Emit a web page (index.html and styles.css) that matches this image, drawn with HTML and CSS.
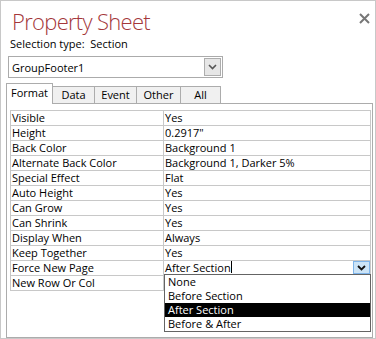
FILE: index.html
```html
<!DOCTYPE html>
<html lang="en">
<head>
    <meta charset="UTF-8">
    <title>Property Sheet</title>
    <link rel="stylesheet" href="styles.css">
</head>
<body>
    <div class="window">
        <div class="header">
            <h1 class="title">Property Sheet</h1>
            <button class="close" title="Close">
                <svg width="11" height="11" viewBox="0 0 11 11">
                    <path d="M1 1 L10 10 M10 1 L1 10" stroke="#777" stroke-width="2"/>
                </svg>
            </button>
        </div>
        <div class="selection">Selection type:&nbsp; Section</div>

        <!-- Object picker -->
        <div class="combo">
            <span class="combo-text">GroupFooter1</span>
            <span class="combo-btn">
                <svg width="9" height="6" viewBox="0 0 9 6"><path d="M1 1 L4.5 4.5 L8 1" stroke="#555" stroke-width="1.6" fill="none"/></svg>
            </span>
        </div>

        <!-- Tabs -->
        <div class="tabs">
            <div class="tab active tab-format">Format</div>
            <div class="tab tab-data">Data</div>
            <div class="tab tab-event">Event</div>
            <div class="tab tab-other">Other</div>
            <div class="tab tab-all">All</div>
        </div>

        <div class="panel">
            <div class="props">
                <div class="row"><div class="name">Visible</div><div class="value">Yes</div></div>
                <div class="row"><div class="name">Height</div><div class="value">0.2917"</div></div>
                <div class="row"><div class="name">Back Color</div><div class="value">Background 1</div></div>
                <div class="row"><div class="name">Alternate Back Color</div><div class="value">Background 1, Darker 5%</div></div>
                <div class="row"><div class="name">Special Effect</div><div class="value">Flat</div></div>
                <div class="row"><div class="name">Auto Height</div><div class="value">Yes</div></div>
                <div class="row"><div class="name">Can Grow</div><div class="value">Yes</div></div>
                <div class="row"><div class="name">Can Shrink</div><div class="value">Yes</div></div>
                <div class="row"><div class="name">Display When</div><div class="value">Always</div></div>
                <div class="row"><div class="name">Keep Together</div><div class="value">Yes</div></div>
                <div class="row"><div class="name">Force New Page</div>
                    <div class="value editing">
                        <span class="edit-text">After Section</span><span class="caret"></span>
                        <span class="drop-btn">
                            <svg width="9" height="6" viewBox="0 0 9 6"><path d="M1 1 L4.5 4.5 L8 1" stroke="#111" stroke-width="1.8" fill="none"/></svg>
                        </span>
                        <!-- open list -->
                        <ul class="droplist">
                            <li>None</li>
                            <li>Before Section</li>
                            <li class="selected">After Section</li>
                            <li>Before &amp; After</li>
                        </ul>
                    </div>
                </div>
                <div class="row"><div class="name">New Row Or Col</div><div class="value"></div></div>
            </div>
        </div>
    </div>
</body>
</html>
```

FILE: styles.css
```css
* {
    box-sizing: border-box;
    margin: 0;
    padding: 0;
}

body {
    font-family: 'Open Sans', sans-serif;
    font-size: 11px;
    color: #000;
    background-color: #fff;
}

.window {
    width: 376px;
    height: 339px;
    border: 1px solid #c8c8c8;
    background-color: #fff;
}

.header {
    display: flex;
    justify-content: space-between;
    align-items: flex-start;
    padding: 6px 5px 0 11px;
}

.title {
    font-family: 'Open Sans', sans-serif;
    font-weight: 300;
    font-size: 22px;
    letter-spacing: -0.7px;
    line-height: 28px;
    color: #a4373a;
}

.close {
    border: none;
    background: none;
    margin-top: 6px;
    width: 11px;
    height: 11px;
    display: flex;
}

.selection {
    padding-left: 9px;
    line-height: 16px;
    margin-top: 1px;
}

.combo {
    display: flex;
    align-items: center;
    justify-content: space-between;
    margin: 4px 0 0 7px;
    width: 215px;
    height: 22px;
    border: 1px solid #ababab;
    padding: 0 1px 0 3px;
}

.combo-btn {
    width: 17px;
    height: 18px;
    border: 1px solid #adadad;
    background-color: #e6e6e6;
    display: flex;
    align-items: center;
    justify-content: center;
}

.tabs {
    display: flex;
    align-items: flex-end;
    margin: 5px 0 0 5px;
    height: 20px;
}

.tab {
    height: 17px;
    line-height: 15px;
    text-align: center;
    border: 1px solid #acacac;
    border-bottom: none;
    background-color: #f0f0f0;
    margin-left: -1px;
}

.tab.active {
    height: 21px;
    line-height: 18px;
    background-color: #fff;
    margin-left: 0;
    margin-bottom: -1px;
    position: relative;
    z-index: 1;
}

.tab-format { width: 47px; }
.tab-data { width: 43px; }
.tab-event { width: 43px; }
.tab-other { width: 45px; }
.tab-all { width: 41px; }

.panel {
    margin: 0 2px 0 5px;
    height: 235px;
    border: 1px solid #acacac;
    padding: 6px 1px 0 3px;
}

.props {
    border-top: 1px solid #c8c8c8;
    border-left: 1px solid #c8c8c8;
    width: 361px;
}

.row {
    display: grid;
    grid-template-columns: 153px 1fr;
    height: 15px;
}

.name, .value {
    border-right: 1px solid #c8c8c8;
    border-bottom: 1px solid #c8c8c8;
    line-height: 14px;
    white-space: nowrap;
}

.name {
    padding-left: 1px;
}

.value {
    padding-left: 1px;
}

.editing {
    position: relative;
    display: flex;
    align-items: flex-start;
}

.edit-text {
    line-height: 13px;
}

.caret {
    display: inline-block;
    width: 1px;
    height: 12px;
    background-color: #000;
}

.drop-btn {
    position: absolute;
    right: 0;
    top: 0;
    width: 17px;
    height: 13px;
    border: 1px solid #7eb4ea;
    background-color: #cce4f7;
    display: flex;
    align-items: center;
    justify-content: center;
}

.droplist {
    list-style: none;
    position: absolute;
    left: 0;
    top: 13px;
    width: 207px;
    border: 1px solid #646464;
    background-color: #fff;
    z-index: 2;
}

.droplist li {
    height: 14px;
    line-height: 14px;
    padding-left: 3px;
}

.droplist li.selected {
    background-color: #000;
    color: #fff;
}
```
